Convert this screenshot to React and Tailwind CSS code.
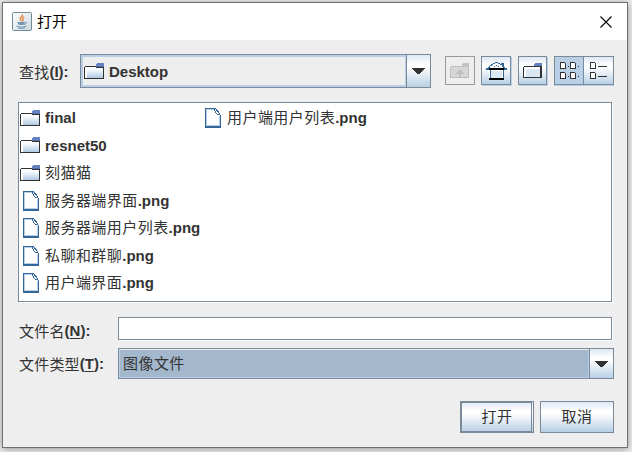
import React from "react";

const cjk = "pb-[2px] font-['Noto_Sans_CJK_SC',sans-serif] font-normal tracking-[0.45px]";
const blueFade = "bg-[linear-gradient(180deg,#dde8f3_0%,#ffffff_30%,#ffffff_38%,#b8cfe5_100%)]";

function Label({ zh, en = "" }) {
  return (
    <span className="flex items-center whitespace-pre leading-[20px]">
      {zh && <span className={cjk}>{zh}</span>}
      {en && <span>{en}</span>}
    </span>
  );
}

function FieldLabel({ zh, letter }) {
  return (
    <span className="flex items-center whitespace-pre leading-[20px]">
      <span className="font-['Noto_Sans_CJK_SC',sans-serif] font-normal tracking-[0.2px]">{zh}</span>
      <span>(<span className="underline underline-offset-2 decoration-1">{letter}</span>):</span>
    </span>
  );
}

function Folder() {
  return (
    <svg width="20" height="17" viewBox="0 0 20 17" shapeRendering="crispEdges" className="block shrink-0">
      <defs>
        <linearGradient id="folderFill" x1="0" y1="0" x2="0" y2="1">
          <stop offset="0" stopColor="#fff" />
          <stop offset=".35" stopColor="#e8f0f8" />
          <stop offset="1" stopColor="#b0cae4" />
        </linearGradient>
      </defs>
      <path d="M1 4h18v11H1z" fill="#fff" />
      <path d="M3 5h16v10H3z" fill="url(#folderFill)" />
      <path d="M1 3h11v1H1zM0 4h1v12H0zM0 15h20v1H0zM19 4h1v12h-1zM12 4h8v1h-8z" fill="#323232" />
      <path d="M13 0h7v3h-8V1h1z" fill="#6382bf" />
      <path d="M12 3h8v1h-8z" fill="#5470a8" />
    </svg>
  );
}

function FileIcon() {
  return (
    <svg width="16" height="20" viewBox="0 0 16 20" shapeRendering="crispEdges" className="block shrink-0">
      <path d="M1 1h9l5 6v12H1z" fill="#fff" />
      <path d="M1 1h10v1H1zM1 2h1v16H1zM14 8h1v10h-1zM1 17h13v1H1z" fill="#b8cfe5" />
      <path d="M0 0h11v1H0zM0 0h1v20H0zM0 18h16v2H0zM15 7h1v12h-1zM11 1h1v1h-1zM12 2h1v1h-1zM13 3h1v2h-1zM14 5h1v2h-1zM9 1h1v2H9zM10 3h1v2h-1zM11 5h1v1h-1zM12 6h2v1h-2zM12 3h1v1h-1zM11 2h1v1h-1z" fill="#336699" />
    </svg>
  );
}

function JavaIcon() {
  return (
    <svg width="20" height="19" viewBox="0 0 20 19" className="block shrink-0">
      <defs>
        <linearGradient id="javaFill" x1="0" y1="0" x2="1" y2="1">
          <stop stopColor="#fff" /><stop offset="1" stopColor="#cbd8df" />
        </linearGradient>
      </defs>
      <rect x=".5" y=".5" width="19" height="18" rx="1" fill="url(#javaFill)" stroke="#718b99" />
      <path d="M10 2.500c2 2-3.500 3-1.500 5.200.6.7.9 1 .5 1.600M12.300 4.800c-2.200 1-1.800 2-1.200 2.800.5.7 0 1.300-.6 1.700" fill="none" stroke="#e58a48" strokeWidth="1.4" />
      <path d="M5.500 10h7c0 1.600-.5 2.500-1.300 3h-4C6 12.400 5.500 11.500 5.500 10z" fill="#7197b5" />
      <path d="M12.500 10.500c2.500-1 2.500 1.500-.8 2M4.500 14.200c3 1.200 7 1.200 10 0M6 16c3 .5 5 .4 7 0" fill="none" stroke="#6d91ad" />
    </svg>
  );
}

function UpFolder() {
  return (
    <svg width="20" height="16" viewBox="0 0 20 16" shapeRendering="crispEdges">
      <path d="M13 0h6v4h-7V1h1z" fill="#c4c4c4" />
      <path d="M1 3h11v1h7v11H0V4h1z" fill="#d6d6d6" />
      <path d="M1 3h11v1H1zM0 4h1v11H0zM0 14h19v1H0zM18 4h1v11h-1zM9 7h2v1h1v1h1v1h1v1h-3v3H9v-3H6v-1h1V9h1V8h1z" fill="#bebebe" />
    </svg>
  );
}

function Home() {
  return (
    <svg width="21" height="18" viewBox="0 0 21 18" shapeRendering="crispEdges">
      <path d="M3 7h15v10H3z" fill="#fff" />
      <path d="M5 9h11v7H5z" fill="#dce9f5" />
      <path d="M3 5h2V4h2V3h2V1h3v2h2v1h2v2H3z" fill="#f4f8fc" />
      <path d="M9 0h3v1H9zM7 1h2v1H7zM12 1h2v1h-2zM5 2h2v1H5zM14 2h1v1h-1zM15 1h3v3h-2V3h-1zM4 3h2v1H4zM3 4h1v1H3zM2 5h2v1H2zM0 6h3v2H0zM18 6h3v2h-3zM17 5h2v1h-2zM16 4h2v1h-2zM8 4h1v1H8zM10 3h1v1h-1zM12 4h1v1h-1zM4 8h1v8H4zM17 8h1v8h-1z" fill="#336699" />
      <path d="M3 6h15v2H3zM3 16h15v2H3z" fill="#000" />
    </svg>
  );
}

function NewFolder() {
  return (
    <svg width="19" height="16" viewBox="0 0 19 16" shapeRendering="crispEdges">
      <path d="M1 4h17v10H1z" fill="#fff" />
      <path d="M3 6h14v8H3z" fill="#dbe8f4" />
      <path d="M1 3h10v1H1zM0 4h1v11H0zM1 14h18v1H1zM17 3h2v12h-2zM11 3h7v1h-7z" fill="#323232" />
      <path d="M12 0h7v3h-8V1h1z" fill="#6382bf" />
    </svg>
  );
}

function GridView() {
  return (
    <svg width="20" height="17" viewBox="0 0 20 17" shapeRendering="crispEdges" className="ml-px">
      <g fill="#fff" stroke="#323232">
        <path d="M.5.5h4l1 1v5h-5zM10.500.5h4l1 1v5h-5zM.5 10.500h4l1 1v5h-5zM10.500 10.500h4l1 1v5h-5z" />
      </g>
      <path d="M8 4h1v1H8zM18 4h1v1h-1zM8 14h1v1H8zM18 14h1v1h-1z" fill="#323232" />
    </svg>
  );
}

function ListView() {
  return (
    <svg width="17" height="17" viewBox="0 0 17 17" shapeRendering="crispEdges">
      <path d="M.5.5h4l1 1v5h-5zM.5 10.500h4l1 1v5h-5z" fill="#fff" stroke="#323232" />
      <path d="M8 4h9v1H8zM8 14h9v1H8z" fill="#323232" />
    </svg>
  );
}

function Arrow() {
  return (
    <span className={`flex w-[24px] shrink-0 items-center justify-center border-l border-[#7a8a99] ${blueFade}`}>
      <svg width="13" height="6" viewBox="0 0 13 6" shapeRendering="crispEdges">
        <path d="M0 0h13v1h-1v1h-1v1h-1v1H9v1H8v1H5V5H4V4H3V3H2V2H1V1H0z" fill="#323232" />
      </svg>
    </span>
  );
}

const toolButton = "flex h-[29px] shrink-0 items-center justify-center border border-[#7a8a99]";

const files = [
  { folder: true, en: "final" },
  { folder: true, en: "resnet50" },
  { folder: true, zh: "刻猫猫" },
  { zh: "服务器端界面", en: ".png" },
  { zh: "服务器端用户列表", en: ".png" },
  { zh: "私聊和群聊", en: ".png" },
  { zh: "用户端界面", en: ".png" },
];

function FileRow({ folder, zh, en }) {
  return (
    <div className="flex h-[27.5px] items-center">
      <span className="flex w-[25px] shrink-0">
        {folder ? <Folder /> : <span className="ml-[3px]"><FileIcon /></span>}
      </span>
      <Label zh={zh} en={en} />
    </div>
  );
}

export default function App() {
  return (
    <div className="h-[452px] w-[632px] overflow-hidden bg-[#eeeeee] pt-[2px] pl-[2px] font-['Liberation_Sans','Noto_Sans_CJK_SC',sans-serif] text-[15px] font-bold text-[#333333]">
      <div className="h-[446px] w-[626px] border border-[#707070] bg-[#eeeeee] shadow-[0_1px_7px_rgba(0,0,0,0.4)]">
        <header className="flex h-[37px] items-center justify-between bg-white pr-[15px] pl-[9px]">
          <div className="flex items-center gap-[5px] text-black">
            <JavaIcon />
            <span className="pb-[2px] font-['Noto_Sans_CJK_SC',sans-serif] font-normal leading-[20px]">打开</span>
          </div>
          <svg width="12" height="12" viewBox="0 0 12 12"><path d="M.5.5l11 11M11.500.5l-11 11" stroke="#000" strokeWidth="1.1" /></svg>
        </header>

        <div className="mt-[14px] flex h-[34px] pl-[16px]">
          <div className="flex w-[61px] items-center pt-px"><FieldLabel zh="查找" letter="I" /></div>
          <div className="flex w-[351px] border border-[#7a8a99]">
            <div className="flex flex-1 items-center gap-[5px] border-2 border-r-1 border-[#b8cfe5] pl-px">
              <Folder /><span className="pt-[2px]">Desktop</span>
            </div>
            <Arrow />
          </div>
          <div className="ml-[14px] flex pt-[2px]">
            <div className="flex h-[29px] w-[30px] items-center justify-center border border-[#999999]"><UpFolder /></div>
            <div className={`${toolButton} ml-[6px] w-[30px] shadow-[1px_1px_0_#b8cfe5] ${blueFade}`}><Home /></div>
            <div className={`${toolButton} ml-[7px] w-[29px] shadow-[1px_1px_0_#b8cfe5] ${blueFade}`}><NewFolder /></div>
            <div className={`${toolButton} ml-[7px] w-[30px] bg-[#b8cfe5] shadow-[0_1px_0_#b8cfe5]`}><GridView /></div>
            <div className={`${toolButton} w-[30px] border-l-0 shadow-[0_1px_0_#b8cfe5] ${blueFade}`}><ListView /></div>
          </div>
        </div>

        <div className="mt-[14px] ml-[15px] flex h-[200px] w-[594px] border border-[#7a8a99] bg-white pt-[1.5px] pl-px shadow-[1px_1px_0_#ffffff]">
          <div className="w-[182px]">{files.map((f, i) => <FileRow key={i} {...f} />)}</div>
          <div><FileRow zh="用户端用户列表" en=".png" /></div>
        </div>

        <div className="mt-[15px] flex h-[23px] pl-[16px]">
          <div className="flex w-[99px] items-center pt-[4px]"><FieldLabel zh="文件名" letter="N" /></div>
          <div className="w-[494px] border border-[#7a8a99] bg-white shadow-[1px_1px_0_#ffffff]" />
        </div>

        <div className="mt-[8px] flex h-[31px] pl-[16px]">
          <div className="flex w-[99px] items-center pt-px"><FieldLabel zh="文件类型" letter="T" /></div>
          <div className="flex w-[496px] border border-[#7a8a99]">
            <div className="flex flex-1 items-center border border-[#b8cfe5] border-t-[#eeeeee] bg-[#a3b8cc] pl-[3px]"><Label zh="图像文件" /></div>
            <Arrow />
          </div>
        </div>

        <footer className="mt-[22px] flex justify-end gap-[6px] pr-[13px]">
          <button className={`flex h-[32px] w-[74px] border border-[#7a8a99] pr-px ${blueFade}`}>
            <span className="flex h-full flex-1 items-center justify-center border border-[#7a8a99] pl-px"><Label zh="打开" /></span>
          </button>
          <button className={`flex h-[32px] w-[74px] items-center justify-center border border-[#7a8a99] ${blueFade}`}><Label zh="取消" /></button>
        </footer>
      </div>
    </div>
  );
}
